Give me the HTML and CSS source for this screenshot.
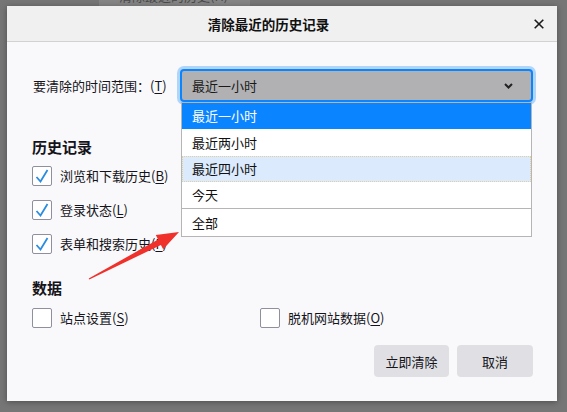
FILE: index.html
```html
<!DOCTYPE html>
<html lang="zh-CN">
<head>
<meta charset="utf-8">
<title>清除最近的历史记录</title>
<link rel="stylesheet" href="styles.css">
</head>
<body>
<div class="behind"><div class="behind-item"><span class="behind-text">清除最近的历史(H)</span></div></div>
<div class="dialog">
  <div class="titlebar">
    <div class="title">清除最近的历史记录</div>
    <div class="close"><svg width="10" height="10" viewBox="0 0 10 10"><path d="M0.7 0.7L9.3 9.3M9.3 0.7L0.7 9.3" stroke="#1a1a1a" stroke-width="1.6" fill="none"/></svg></div>
  </div>
  <div class="content">
    <div class="range-row">
      <span class="label">要清除的时间范围：(<u>T</u>)</span>
      <div class="select">
        <span>最近一小时</span>
        <svg class="chev" width="9" height="6" viewBox="0 0 9 6"><path d="M1 1L4.5 4.5L8 1" stroke="#222" stroke-width="2" fill="none"/></svg>
      </div>
    </div>
    <h3 class="section">历史记录</h3>
    <div class="checks">
      <label class="cb"><span class="box checked"><svg width="20" height="20" viewBox="0 0 20 20"><path d="M4.5 11L8.5 15.5L15.5 4" stroke="#2b8ce0" stroke-width="1.8" fill="none"/></svg></span><span>浏览和下载历史(<u>B</u>)</span></label>
      <label class="cb"><span class="box checked"><svg width="20" height="20" viewBox="0 0 20 20"><path d="M4.5 11L8.5 15.5L15.5 4" stroke="#2b8ce0" stroke-width="1.8" fill="none"/></svg></span><span>登录状态(<u>L</u>)</span></label>
      <label class="cb"><span class="box checked"><svg width="20" height="20" viewBox="0 0 20 20"><path d="M4.5 11L8.5 15.5L15.5 4" stroke="#2b8ce0" stroke-width="1.8" fill="none"/></svg></span><span>表单和搜索历史(<u>F</u>)</span></label>
    </div>
    <h3 class="section data">数据</h3>
    <div class="data-row">
      <label class="cb"><span class="box"></span><span>站点设置(<u>S</u>)</span></label>
      <label class="cb"><span class="box"></span><span>脱机网站数据(<u>O</u>)</span></label>
    </div>
    <div class="buttons">
      <button class="btn btn-clear">立即清除</button>
      <button class="btn btn-cancel">取消</button>
    </div>
  </div>
  <ul class="dropdown">
    <li class="opt selected">最近一小时</li>
    <li class="opt tall">最近两小时</li>
    <li class="opt hover">最近四小时</li>
    <li class="opt">今天</li>
    <li class="opt sep">全部</li>
  </ul>
  <svg class="arrow" width="200" height="90" viewBox="0 0 200 90"><polygon points="81.7,272.4 151.1,233.5 148.8,229.1 172,226 156.2,243.3 153.9,238.9 82.3,273.6" transform="translate(0,-200)" fill="#f0302a"/></svg>
</div>
</body>
</html>
```
FILE: styles.css
```css
html, body {
  margin: 0;
  padding: 0;
}
body {
  background: #767676;
  font-family: "Noto Sans CJK SC", "Noto Sans", sans-serif;
  color: #15141a;
  font-size: 13px;
  height: 412px;
  overflow: hidden;
}
.behind {
  height: 6px;
  overflow: hidden;
  padding-left: 99px;
}
.behind-item {
  width: 151px;
  height: 6px;
  background: #858585;
  overflow: hidden;
}
.behind-text {
  display: block;
  margin-top: -12px;
  padding-left: 20px;
  line-height: 16px;
  color: #4a4a4a;
  white-space: nowrap;
}
.dialog {
  position: relative;
  margin-left: 7px;
  width: 550px;
  height: 395px;
  background: #f9f9fb;
  box-shadow: 0 1px 6px rgba(0, 0, 0, 0.35);
}
.titlebar {
  display: grid;
  grid-template-columns: 1fr auto;
  align-items: center;
  height: 35px;
  background: #f0f0f0;
  border-bottom: 1px solid #d2d2d2;
}
.title {
  text-align: center;
  font-size: 13.5px;
  font-weight: 700;
  line-height: 20px;
  color: #111;
}
.close {
  display: flex;
  padding: 0 13px 0 4px;
  margin-top: 1px;
}
.content {
  padding: 0 24px 0 25px;
  display: flex;
  flex-direction: column;
}
.range-row {
  display: flex;
  align-items: center;
  margin-top: 27px;
}
.label {
  line-height: 20px;
  padding-left: 1px;
}
u {
  text-decoration: underline;
  text-underline-offset: 2px;
}
.select {
  margin-left: auto;
  width: 353px;
  height: 33px;
  box-sizing: border-box;
  border: 2px solid #0a84ff;
  border-radius: 4px;
  box-shadow: 0 0 0 3px #b0d5fb;
  background: #b1b1b3;
  display: flex;
  align-items: center;
  justify-content: space-between;
  padding: 0 18px 0 10px;
  line-height: 20px;
  color: #1a1a1a;
}
.chev {
  display: block;
}
.section {
  margin: 35px 0 0;
  font-size: 15px;
  font-weight: 700;
  line-height: 20px;
  color: #15141a;
}
.section.data {
  margin-top: 24px;
}
.checks {
  display: flex;
  flex-direction: column;
  gap: 14px;
  margin-top: 9px;
}
.cb {
  display: flex;
  align-items: center;
  gap: 8px;
  line-height: 20px;
}
.box {
  width: 20px;
  height: 20px;
  box-sizing: border-box;
  border: 1px solid #8f8f9d;
  border-radius: 2px;
  background: #fff;
  display: flex;
  align-items: center;
  justify-content: center;
  overflow: hidden;
}
.box svg {
  display: block;
  flex: none;
}
.data-row {
  display: grid;
  grid-template-columns: 228px 1fr;
  margin-top: 10px;
}
.buttons {
  display: flex;
  justify-content: flex-end;
  gap: 8px;
  margin-top: 17px;
}
.btn {
  height: 32px;
  border: none;
  border-radius: 4px;
  background: #e0e0e4;
  font-family: inherit;
  font-size: 13px;
  color: #15141a;
  padding: 0;
}
.btn-clear {
  width: 75px;
}
.btn-cancel {
  width: 76px;
}
.dropdown {
  position: absolute;
  left: 174px;
  top: 96px;
  width: 351px;
  margin: 0;
  padding: 0;
  list-style: none;
  box-sizing: border-box;
  border: 1px solid #b5b5b5;
  background: #fff;
}
.opt {
  height: 26px;
  line-height: 26px;
  padding-left: 10px;
  color: #111;
  box-sizing: border-box;
}
.opt.tall {
  height: 27px;
  line-height: 27px;
}
.opt.selected {
  background: #0a84ff;
  color: #fff;
}
.opt.hover {
  background: #dbeafc;
  border: 1px dotted #e4cf98;
  line-height: 24px;
  padding-left: 9px;
}
.opt.sep {
  border-top: 1px solid #b5b5b5;
  height: 28px;
  line-height: 27px;
}
.arrow {
  position: absolute;
  left: 0;
  top: 200px;
  overflow: visible;
}
```
